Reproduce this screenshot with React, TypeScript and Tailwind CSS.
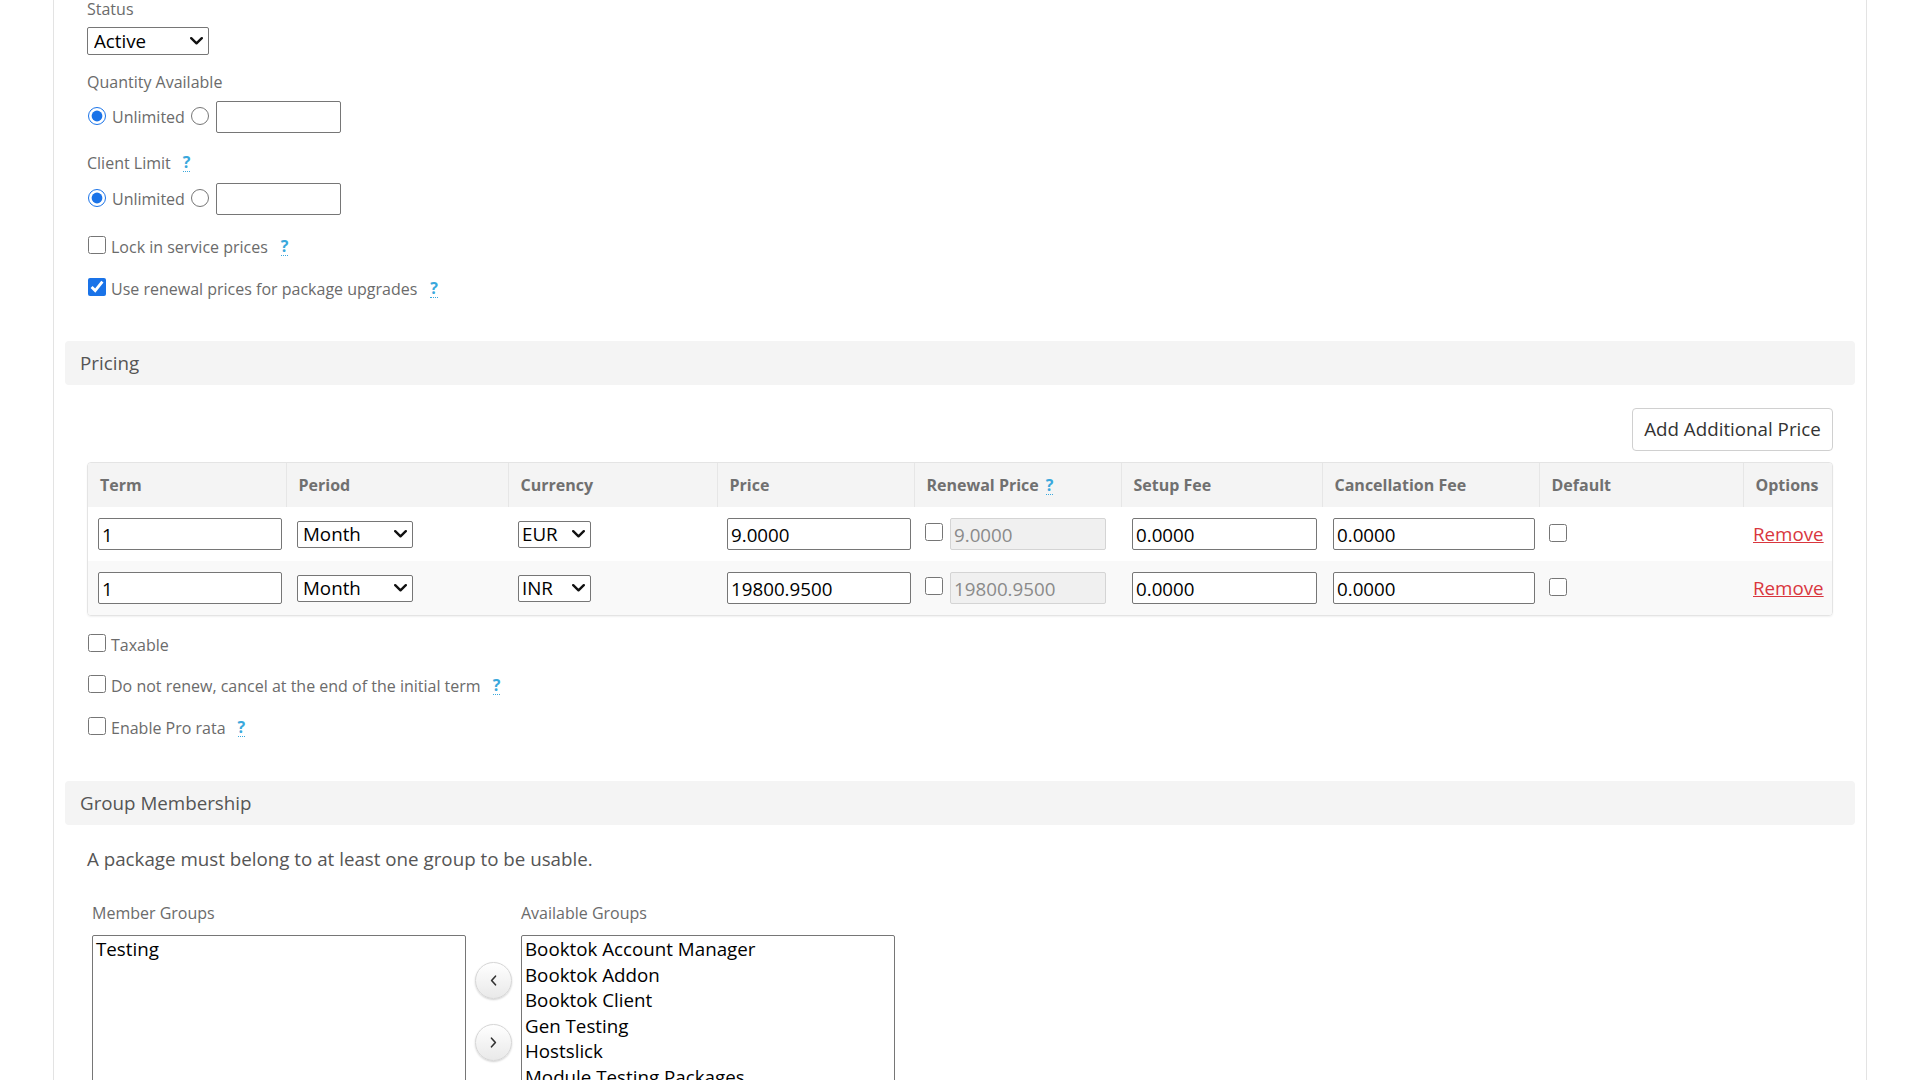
import React from 'react';

type PriceRow = {
  term: string;
  period: string;
  currency: string;
  price: string;
  renewal: string;
  setup: string;
  cancel: string;
};

const rows: PriceRow[] = [
  { term: '1', period: 'Month', currency: 'EUR', price: '9.0000', renewal: '9.0000', setup: '0.0000', cancel: '0.0000' },
  { term: '1', period: 'Month', currency: 'INR', price: '19800.9500', renewal: '19800.9500', setup: '0.0000', cancel: '0.0000' },
];

const memberGroups = ['Testing'];
const availableGroups = [
  'Booktok Account Manager',
  'Booktok Addon',
  'Booktok Client',
  'Gen Testing',
  'Hostslick',
  'Module Testing Packages',
  'Shared Hosting',
];

function Help({ className = '' }: { className?: string }) {
  return (
    <span className={`inline-block font-bold text-[16px] leading-[17px] text-[#3aa8dc] border-b border-dotted border-[#3aa8dc] ${className}`}>
      ?
    </span>
  );
}

function Label({ children, className = '' }: { children: React.ReactNode; className?: string }) {
  return <div className={`text-[16px] leading-[18px] text-[#6b6b6b] flex items-center ${className}`}>{children}</div>;
}

function CheckRow({ label, checked, help, helpGap, className = '' }: { label: string; checked?: boolean; help?: boolean; helpGap?: string; className?: string }) {
  return (
    <div className={`flex items-center h-[24px] ${className}`}>
      <input type="checkbox" defaultChecked={checked} className="w-[18px] h-[18px] m-0 mb-[5px] ml-[1px] accent-[#1a73e8]" />
      <span className="ml-[5px] text-[16px] text-[#6b6b6b]">{label}</span>
      {help && <Help className={helpGap ?? 'ml-[13px]'} />}
    </div>
  );
}

function RadioRow({ className = '' }: { className?: string }) {
  return (
    <div className={`flex items-center h-[32px] ${className}`}>
      <input type="radio" defaultChecked className="w-[18px] h-[18px] m-0 mb-[3px] ml-[1px] accent-[#1a73e8]" />
      <span className="ml-[6px] text-[16px] text-[#6b6b6b]">Unlimited</span>
      <input type="radio" className="w-[18px] h-[18px] m-0 mb-[3px] ml-[6px]" />
      <input type="text" className="ml-[7px] w-[125px] h-[32px] border border-[#767676] rounded-[2px] bg-white" />
    </div>
  );
}

function SectionBar({ title, className = '' }: { title: string; className?: string }) {
  return (
    <div className={`h-[44px] bg-[#f4f4f4] rounded-[4px] flex items-center pl-[15px] text-[18.75px] text-[#555] ${className}`}>
      {title}
    </div>
  );
}

function Chevron() {
  return (
    <svg width="13" height="8" viewBox="0 0 13 8" className="absolute right-[6px] top-1/2 -translate-y-1/2 pointer-events-none">
      <path d="M1.2 1.2 L6.5 6.3 L11.8 1.2" fill="none" stroke="#111" strokeWidth="2.4" strokeLinecap="round" strokeLinejoin="round" />
    </svg>
  );
}

function Select({ value, options, className }: { value: string; options: string[]; className: string }) {
  return (
    <div className="relative inline-block align-middle">
      <select
        defaultValue={value}
        className={`appearance-none block border border-[#767676] rounded-[2px] bg-white text-[18.75px] leading-[22px] text-black ${className}`}
      >
        {options.map((o) => (
          <option key={o}>{o}</option>
        ))}
      </select>
      <Chevron />
    </div>
  );
}

const inputCls = 'h-[32px] border border-[#767676] rounded-[2px] bg-white px-[3px] text-[18.75px] text-black';

const cols = [198, 222, 209, 197, 207, 201, 217, 204, 90];

function PricingTable() {
  return (
    <div className="mt-[11px] border border-[#e4e4e4] rounded-[4px] overflow-hidden shadow-[0_1px_2px_rgba(0,0,0,0.06)]">
      <table className="w-full table-fixed border-collapse">
        <colgroup>
          {cols.map((w, i) => (
            <col key={i} style={{ width: w }} />
          ))}
        </colgroup>
        <thead>
          <tr className="bg-[#f4f4f4] h-[44px] text-left">
            {['Term', 'Period', 'Currency', 'Price', 'Renewal Price', 'Setup Fee', 'Cancellation Fee', 'Default', 'Options'].map((h, i) => (
              <th key={h} className={`pl-[12px] text-[16px] font-bold text-[#707070] ${i < 8 ? 'border-r border-[#e6e6e6]' : ''}`}>
                {h}
                {h === 'Renewal Price' && <Help className="ml-[7px] text-[15px]" />}
              </th>
            ))}
          </tr>
        </thead>
        <tbody>
          {rows.map((r, idx) => (
            <tr key={idx} className={`h-[54px] ${idx % 2 === 1 ? 'bg-[#f9f9f9]' : 'bg-white'}`}>
              <td className="pl-[10px]">
                <input readOnly defaultValue={r.term} className={`${inputCls} w-[184px]`} />
              </td>
              <td className="pl-[11px]">
                <Select value={r.period} options={['Day', 'Week', 'Month', 'Year']} className="w-[116px] h-[27px] pl-[5px]" />
              </td>
              <td className="pl-[10px]">
                <Select value={r.currency} options={['EUR', 'INR', 'USD']} className="w-[73px] h-[27px] pl-[3px]" />
              </td>
              <td className="pl-[10px]">
                <input readOnly defaultValue={r.price} className={`${inputCls} w-[184px]`} />
              </td>
              <td className="pl-[11px]">
                <div className="flex items-center">
                  <input type="checkbox" className="w-[18px] h-[18px] m-0 mb-[4px]" />
                  <input
                    disabled
                    defaultValue={r.renewal}
                    className="ml-[7px] w-[156px] h-[32px] border border-[#d4d4d4] rounded-[2px] bg-[#f0f0f0] px-[3px] text-[18.75px] text-[#8a8a8a]"
                  />
                </div>
              </td>
              <td className="pl-[11px]">
                <input readOnly defaultValue={r.setup} className={`${inputCls} w-[185px]`} />
              </td>
              <td className="pl-[11px]">
                <input readOnly defaultValue={r.cancel} className={`${inputCls} w-[202px]`} />
              </td>
              <td className="pl-[10px]">
                <input type="checkbox" className="w-[18px] h-[18px] m-0 mb-[5px] align-middle" />
              </td>
              <td className="pl-[10px]">
                <a href="#" className="text-[18.75px] text-[#d9363e] underline">Remove</a>
              </td>
            </tr>
          ))}
        </tbody>
      </table>
    </div>
  );
}

function ArrowButton({ dir }: { dir: 'left' | 'right' }) {
  return (
    <button className="w-[37px] h-[37px] rounded-full border border-[#d6d6d6] bg-gradient-to-b from-white to-[#e9e9e9] shadow-[0_1px_2px_rgba(0,0,0,0.18)] flex items-center justify-center">
      <svg width="7" height="11" viewBox="0 0 7 11">
        <path
          d={dir === 'left' ? 'M5.5 1.2 L1.6 5.5 L5.5 9.8' : 'M1.5 1.2 L5.4 5.5 L1.5 9.8'}
          fill="none"
          stroke="#333"
          strokeWidth="1.6"
          strokeLinecap="round"
          strokeLinejoin="round"
        />
      </svg>
    </button>
  );
}

function GroupList({ items }: { items: string[] }) {
  return (
    <div className="w-[374px] h-[220px] border border-[#767676] rounded-[2px] bg-white overflow-hidden">
      {items.map((g) => (
        <div key={g} className="pl-[3px] text-[18.75px] leading-[25.6px] text-black">
          {g}
        </div>
      ))}
    </div>
  );
}

export default function App() {
  return (
    <div className="min-h-screen bg-white font-['Open_Sans',sans-serif] overflow-hidden h-[1080px]">
      <div className="ml-[53px] w-[1814px] border-x border-[#e3e3e3] px-[11px] min-h-[1080px]">
        <div className="px-[22px]">
          <Label>Status</Label>
          <div className="mt-[9px]">
            <Select value="Active" options={['Active', 'Inactive', 'Restricted']} className="w-[122px] h-[28px] pl-[6px]" />
          </div>

          <Label className="mt-[18px]">Quantity Available</Label>
          <RadioRow className="mt-[10px]" />

          <Label className="mt-[21px]">
            Client Limit
            <Help className="ml-[12px]" />
          </Label>
          <RadioRow className="mt-[11px]" />

          <CheckRow label="Lock in service prices" help className="mt-[20px]" />
          <CheckRow label="Use renewal prices for package upgrades" checked help className="mt-[18px]" />
        </div>

        <SectionBar title="Pricing" className="mt-[40px]" />

        <div className="px-[22px]">
          <div className="flex justify-end mt-[23px]">
            <button className="w-[201px] h-[43px] border border-[#d0d0d0] rounded-[4px] bg-white text-[18.75px] text-[#333]">
              Add Additional Price
            </button>
          </div>

          <PricingTable />

          <CheckRow label="Taxable" className="mt-[17px]" />
          <CheckRow label="Do not renew, cancel at the end of the initial term" help helpGap="ml-[12px]" className="mt-[17px]" />
          <CheckRow label="Enable Pro rata" help helpGap="ml-[12px]" className="mt-[18px]" />
        </div>

        <SectionBar title="Group Membership" className="mt-[41px]" />

        <div className="px-[22px]">
          <p className="mt-[21px] text-[18.75px] leading-[26px] text-[#555]">A package must belong to at least one group to be usable.</p>

          <div className="ml-[5px] mt-[32px] flex">
            <div>
              <Label>Member Groups</Label>
              <div className="mt-[13px]">
                <GroupList items={memberGroups} />
              </div>
            </div>
            <div className="ml-[9px] mt-[32px] pt-[26px] flex flex-col gap-[25px]">
              <ArrowButton dir="left" />
              <ArrowButton dir="right" />
            </div>
            <div className="ml-[9px]">
              <Label>Available Groups</Label>
              <div className="mt-[13px]">
                <GroupList items={availableGroups} />
              </div>
            </div>
          </div>
        </div>
      </div>
    </div>
  );
}
